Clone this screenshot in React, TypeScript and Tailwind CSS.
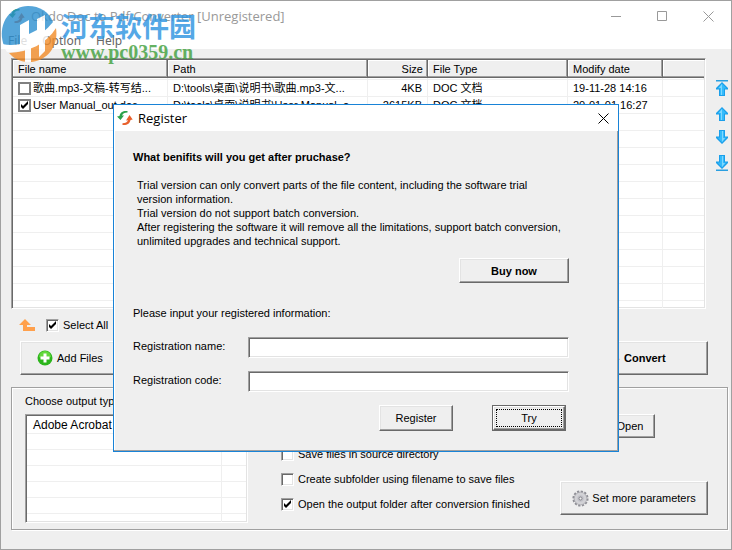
import React from "react";

const files = [
  { name: "歌曲.mp3-文稿-转写结...", path: "D:\\tools\\桌面\\说明书\\歌曲.mp3-文...", size: "4KB", type: "DOC 文档", date: "19-11-28 14:16", checked: false },
  { name: "User Manual_out.doc", path: "D:\\tools\\桌面\\说明书\\User Manual_o...", size: "2615KB", type: "DOC 文档", date: "20-01-01 16:27", checked: true },
];

const sunken =
  "border border-t-[#a0a0a0] border-l-[#a0a0a0] border-r-white border-b-white shadow-[inset_1px_1px_0_#696969,inset_-1px_-1px_0_#e3e3e3]";
const raised =
  "bg-[#efefef] border border-t-white border-l-white border-r-[#696969] border-b-[#696969] shadow-[inset_-1px_-1px_0_#a0a0a0,inset_1px_1px_0_#e3e3e3]";

export default function App() {
  return (
    <div className="relative min-h-screen flex flex-col border border-[#a0a0a0] bg-[#efefef] text-[11px] leading-[14px] text-black font-['Liberation_Sans','Noto_Sans_CJK_SC',sans-serif] overflow-hidden">
      <TitleBar />

      <main className="flex flex-col pl-[10px] pr-[3px] pt-[9px]">
        <div className="flex gap-2 -mr-[2px]">
          <FileList />
          <div className="w-4 pt-[22px] flex flex-col items-center gap-[9px] shrink-0">
            <ArrowButton label="Move to top" bar />
            <ArrowButton label="Move up" />
            <ArrowButton label="Move down" down />
            <ArrowButton label="Move to bottom" down bar />
          </div>
        </div>

        <div className="flex items-center h-[32px] pl-2">
          <button aria-label="Parent folder" className="mr-[10px]">
            <svg width="17" height="14" viewBox="0 0 17 14" fill="#ffa04c">
              <path d="M6 1 0 7h4v6h12V9H8V7h4z" />
            </svg>
          </button>
          <Check label="Select All" checked />
        </div>

        <div className="flex justify-between pl-[9px] pr-[20px]">
          <button className={`${raised} w-[110px] h-[34px] pl-4 flex items-center gap-1`}>
            <svg width="16" height="16" viewBox="0 0 16 16">
              <circle cx="8" cy="8" r="7.5" fill="#2cb51c" />
              <path d="M2 7a6 6 0 0 1 12 0q-6 3-12 0" fill="#62d83c" />
              <path d="M6.500 3.500h3v3h3v3h-3v3h-3v-3h-3v-3h3z" fill="#fff" />
            </svg>
            Add Files
          </button>
          <button className={`${raised} w-[148px] h-[34px] pl-[43px] flex items-center gap-1 font-bold`}>
            <SwapIcon />
            Convert
          </button>
        </div>

        <OutputPanel />
      </main>

      <RegisterDialog />
      <Watermark />
    </div>
  );
}

function TitleBar() {
  return (
    <header className="h-12 bg-white text-[#999] font-['Open_Sans',sans-serif] flex flex-col">
      <div className="h-[30px] flex items-center justify-between pl-2 pr-[17px]">
        <div className="flex items-center gap-[6px] text-[13px]">
          <SwapIcon />
          <h1>Okdo Doc to Pdf Converter [Unregistered]</h1>
        </div>
        <div className="flex items-center gap-[35px]">
          <button aria-label="Minimize">
            <svg width="11" height="11" viewBox="0 0 11 11" stroke="#999">
              <path d="M0 5.500h10" />
            </svg>
          </button>
          <button aria-label="Maximize">
            <svg width="11" height="11" viewBox="0 0 11 11" fill="none" stroke="#999">
              <path d="M.5.5h9v9h-9z" />
            </svg>
          </button>
          <button aria-label="Close">
            <CloseIcon />
          </button>
        </div>
      </div>
      <nav className="flex gap-[15px] pt-[3px] pl-[7px] font-['Noto_Sans',sans-serif] text-[12px] text-[#666]">
        <button>File</button>
        <button>Option</button>
        <button>Help</button>
      </nav>
    </header>
  );
}

function FileList() {
  const head = "h-[18px] px-[5px] font-normal bg-[#efefef] shadow-[inset_-1px_-1px_0_#696969,inset_-2px_-2px_0_#a0a0a0,inset_1px_1px_0_#fff]";
  const cell = "h-[17px] px-[5px] py-0 border-b border-r border-[#efefef] last:border-r-0 whitespace-nowrap overflow-hidden";
  return (
    <div className={`${sunken} flex-1 h-[251px] bg-white p-px overflow-hidden`}>
      <table className="w-full table-fixed border-separate border-spacing-0 text-left">
        <colgroup>
          <col className="w-[155px]" />
          <col className="w-[200px]" />
          <col className="w-[60px]" />
          <col className="w-[140px]" />
          <col className="w-[95px]" />
          <col />
        </colgroup>
        <thead>
          <tr>
            <th className={head}>File name</th>
            <th className={head}>Path</th>
            <th className={`${head} text-right`}>Size</th>
            <th className={head}>File Type</th>
            <th className={head}>Modify date</th>
            <th className="bg-[#efefef] shadow-[inset_0_-1px_0_#696969,inset_0_-2px_0_#a0a0a0,inset_1px_1px_0_#fff]"></th>
          </tr>
        </thead>
        <tbody>
          <tr>
            {[0, 1, 2, 3, 4, 5].map((c) => (
              <td key={c} className="h-[2px] p-0 border-b border-r border-[#efefef]"></td>
            ))}
          </tr>
          {files.map((f) => (
            <tr key={f.name}>
              <td className={cell}>
                <label className="flex items-center gap-[2px] h-4">
                  <CheckBox checked={f.checked} flat />
                  {f.name}
                </label>
              </td>
              <td className={cell}>{f.path}</td>
              <td className={`${cell} text-right`}>{f.size}</td>
              <td className={cell}>{f.type}</td>
              <td className={cell}>{f.date}</td>
              <td className={cell}></td>
            </tr>
          ))}
          {Array.from({ length: 12 }, (_, r) => (
            <tr key={r}>
              {[0, 1, 2, 3, 4, 5].map((c) => (
                <td key={c} className={cell}></td>
              ))}
            </tr>
          ))}
        </tbody>
      </table>
    </div>
  );
}

function OutputPanel() {
  return (
    <section className="mt-[12px] h-[143px] flex pl-[13px] pr-[19px] border border-[#a0a0a0] shadow-[1px_1px_0_#fff,inset_1px_1px_0_#fff]">
      <div className="w-[223px] shrink-0 pt-[6px]">
        <h2>Choose output type</h2>
        <ul className={`${sunken} mt-[6px] h-[109px] bg-white p-px overflow-hidden`}>
          {["Adobe Acrobat Document (*.pdf)", "", "", "", "", "", ""].map((t, i) => (
            <li key={i} className="flex h-4 text-[12px] first:h-[18px] first:pt-[2px] border-b border-[#efefef]">
              <span className="w-[195px] h-full pl-[6px] border-r border-[#efefef]">{t}</span>
            </li>
          ))}
        </ul>
      </div>
      <div className="flex-1 flex flex-col pl-[33px] pt-[26px]">
        <div className="flex justify-end pr-[53px]">
          <button className={`${raised} w-[50px] h-[24px]`}>Open</button>
        </div>
        <div className="flex justify-between">
          <div className="flex flex-col gap-[11px] pt-[9px]">
            <Check label="Save files in source directory" />
            <Check label="Create subfolder using filename to save files" />
            <Check label="Open the output folder after conversion finished" checked />
          </div>
          <button className={`${raised} mt-[43px] w-[148px] h-[34px] flex items-center justify-center gap-[3px]`}>
            <GearIcon />
            Set more parameters
          </button>
        </div>
      </div>
    </section>
  );
}

function RegisterDialog() {
  return (
    <div
      role="dialog"
      aria-label="Register"
      className="absolute left-[112px] top-[103px] w-[506px] h-[348px] z-10 bg-[#efefef] border border-[#1883d7] shadow-[inset_-1px_-1px_0_#a0a0a0,inset_1px_1px_0_#fff]"
    >
      <div className="h-[26px] bg-white flex items-center pl-[3px] pr-[9px] gap-[5px] font-['Open_Sans',sans-serif] text-[13px]">
        <SwapIcon />
        <span className="flex-1">Register</span>
        <button aria-label="Close" className="text-black">
          <CloseIcon />
        </button>
      </div>
      <div className="flex flex-col pl-[19px] pr-[49px] pt-[19px]">
        <h2 className="font-bold">What benifits will you get after pruchase?</h2>
        <p className="mt-[14px] pl-1">
          Trial version can only convert parts of the file content, including the software trial
          <br />
          version information.
          <br />
          Trial version do not support batch conversion.
          <br />
          After registering the software it will remove all the limitations, support batch conversion,
          <br />
          unlimited upgrades and technical support.
        </p>
        <button className={`${raised} self-end mt-[10px] w-[110px] h-[25px] font-bold`}>Buy now</button>
        <p className="mt-[23px]">Please input your registered information:</p>
        <div className="mt-[17px] flex flex-col gap-[13px]">
          <Field id="reg-name" label="Registration name:" />
          <Field id="reg-code" label="Registration code:" />
        </div>
        <div className="flex justify-end gap-[39px] mt-[13px] pr-[3px]">
          <button className={`${raised} w-[74px] h-[26px]`}>Register</button>
          <button className="w-[74px] h-[26px] border border-[#696969]">
            <span className={`${raised} flex h-full p-[2px]`}>
              <span className="flex-1 flex items-center justify-center border border-dotted border-black">Try</span>
            </span>
          </button>
        </div>
      </div>
    </div>
  );
}

function Field({ id, label }: { id: string; label: string }) {
  return (
    <div className="flex items-start">
      <label htmlFor={id} className="w-[115px] pt-[2px]">
        {label}
      </label>
      <input id={id} type="text" className={`${sunken} flex-1 h-[21px] px-1 bg-white outline-none`} />
    </div>
  );
}

function Check({ label, checked }: { label: string; checked?: boolean }) {
  return (
    <label className="flex items-center gap-[4px]">
      <CheckBox checked={checked} />
      {label}
    </label>
  );
}

function CheckBox({ checked, flat }: { checked?: boolean; flat?: boolean }) {
  return (
    <span className="relative flex shrink-0">
      <input
        type="checkbox"
        defaultChecked={checked}
        className={`peer appearance-none size-[13px] bg-white ${flat ? "border-2 border-[#808080]" : sunken}`}
      />
      <svg
        width="13"
        height="13"
        viewBox="0 0 13 13"
        className="absolute inset-0 pointer-events-none hidden peer-checked:block"
      >
        <path d="M3 5v3l2 2 5-5V2L5 7z" fill="#000" />
      </svg>
    </span>
  );
}

function ArrowButton({ label, down, bar }: { label: string; down?: boolean; bar?: boolean }) {
  return (
    <button aria-label={label}>
      <svg width="14" height="16" viewBox="0 0 14 16" className={down ? "rotate-180" : ""}>
        {bar && <path d="M1 0h12v1.500H1z" fill="#2a9fe0" />}
        <path d="M7 2 1 8v1.500h3V16h6V9.500h3V8z" fill="#1b9fea" />
        <path d="M7 3.500 2.500 8.500H5V15h4V8.500h2.500z" fill="#35bbfb" />
        <path d="M7 4 4 8h2v7h1z" fill="#7fd8ff" />
      </svg>
    </button>
  );
}

function CloseIcon() {
  return (
    <svg width="11" height="11" viewBox="0 0 11 11" fill="none" stroke="currentColor">
      <path d="m.5.5 10 10m0-10-10 10" />
    </svg>
  );
}

function SwapIcon() {
  return (
    <svg width="16" height="16" viewBox="0 0 16 16" className="shrink-0">
      <path d="M10.500 1C6 .5 3 2.500 2.500 6L0 6.500 3.500 10 7 5.500H5c.8-2 2.500-3 5.500-3z" fill="#2ba24a" />
      <path d="M5.500 15c4.500.5 7.500-1.500 8-5l2.200-.5L12.500 5 9 10.500l2-.2c-.8 2-2.500 3-5.500 3z" fill="#e8602c" />
    </svg>
  );
}

function GearIcon() {
  return (
    <svg width="17" height="17" viewBox="0 0 17 17" className="shrink-0">
      <circle cx="8.500" cy="8.500" r="7" fill="none" stroke="#8f8f96" strokeWidth="2.200" strokeDasharray="2.200 1.465" />
      <circle cx="8.500" cy="8.500" r="6.300" fill="#d2d2d6" stroke="#a2a2a8" strokeWidth=".7" />
      <circle cx="8.500" cy="8.500" r="3.200" fill="#c2c2c8" />
      <circle cx="8.500" cy="8.500" r="1.500" fill="#efefef" stroke="#85858c" />
    </svg>
  );
}

function Watermark() {
  return (
    <div className="absolute left-0 top-[4px] flex gap-[4px] z-20 pointer-events-none opacity-80">
      <svg width="56" height="58" viewBox="0 0 56 58">
        <path d="M3 41C-4 22 6 2 27 1c12 0 21 6 25 16C39 33 20 42 3 41z" fill="#2b8fd0" />
        <path d="M8 48c20-1 37-9 47-25 3 19-10 34-27 34-8 0-15-3-20-9z" fill="#f28c28" />
        <path d="m19 20 9-5v14l8-4V14l8-4v36l-6 6V36l-8 4v17h-6V42h-5z" fill="#fff" />
        <path d="M1 39c20 4 40-5 52-22l2 5C44 39 24 48 6 47z" fill="#fff" />
      </svg>
      <div className="flex flex-col font-bold whitespace-nowrap">
        <span className="mt-[5px] text-[27px] leading-[32px] text-[#2b93e0] font-['Noto_Sans_CJK_SC',sans-serif]">河东软件园</span>
        <span className="text-[20px] leading-5 text-[#3fa03c] font-['Liberation_Serif',serif]">www.pc0359.cn</span>
      </div>
    </div>
  );
}
